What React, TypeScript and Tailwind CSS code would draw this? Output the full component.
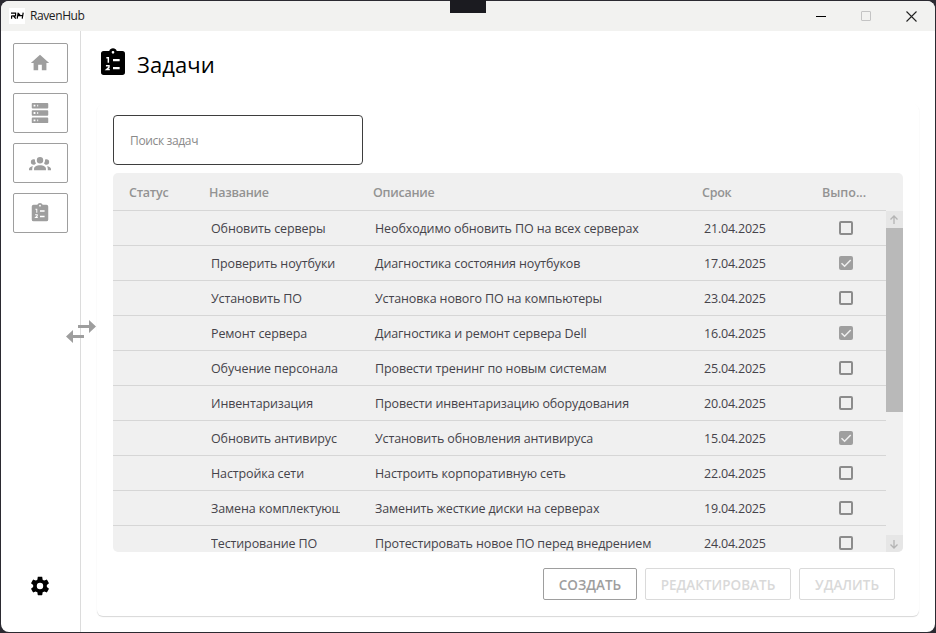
import React from "react";

const HOME = "M10,20V14H14V20H19V12H22L12,3L2,12H5V20H10Z";
const SERVER =
  "M4,1H20A1,1 0 0,1 21,2V6A1,1 0 0,1 20,7H4A1,1 0 0,1 3,6V2A1,1 0 0,1 4,1M4,9H20A1,1 0 0,1 21,10V14A1,1 0 0,1 20,15H4A1,1 0 0,1 3,14V10A1,1 0 0,1 4,9M4,17H20A1,1 0 0,1 21,18V22A1,1 0 0,1 20,23H4A1,1 0 0,1 3,22V18A1,1 0 0,1 4,17M9,5H10V3H9V5M9,13H10V11H9V13M9,21H10V19H9V21M5,3V5H7V3H5M5,11V13H7V11H5M5,19V21H7V19H5Z";
const GROUP =
  "M12,5.5A3.5,3.5 0 0,1 15.5,9A3.5,3.5 0 0,1 12,12.5A3.5,3.5 0 0,1 8.5,9A3.5,3.5 0 0,1 12,5.5M5,8C5.56,8 6.08,8.15 6.53,8.42C6.38,9.85 6.8,11.27 7.66,12.38C7.16,13.34 6.16,14 5,14A3,3 0 0,1 2,11A3,3 0 0,1 5,8M19,8A3,3 0 0,1 22,11A3,3 0 0,1 19,14C17.84,14 16.84,13.34 16.34,12.38C17.2,11.27 17.62,9.85 17.47,8.42C17.92,8.15 18.44,8 19,8M5.5,18.25C5.5,16.18 8.41,14.5 12,14.5C15.59,14.5 18.5,16.18 18.5,18.25V20H5.5V18.25M0,20V18.5C0,17.11 1.89,15.94 4.45,15.6C3.86,16.28 3.5,17.22 3.5,18.25V20H0M24,20H20.5V18.25C20.5,17.22 20.14,16.28 19.55,15.6C22.11,15.94 24,17.11 24,18.5V20Z";
const COG =
  "M12,15.5A3.5,3.5 0 0,1 8.5,12A3.5,3.5 0 0,1 12,8.5A3.5,3.5 0 0,1 15.5,12A3.5,3.5 0 0,1 12,15.5M19.43,12.97C19.47,12.65 19.5,12.33 19.5,12C19.5,11.67 19.47,11.34 19.43,11L21.54,9.37C21.73,9.22 21.78,8.95 21.66,8.73L19.66,5.27C19.54,5.05 19.27,4.96 19.05,5.05L16.56,6.05C16.04,5.66 15.5,5.32 14.87,5.07L14.5,2.42C14.46,2.18 14.25,2 14,2H10C9.75,2 9.54,2.18 9.5,2.42L9.13,5.07C8.5,5.32 7.96,5.66 7.44,6.05L4.95,5.05C4.73,4.96 4.46,5.05 4.34,5.27L2.34,8.73C2.21,8.95 2.27,9.22 2.46,9.37L4.57,11C4.53,11.34 4.5,11.67 4.5,12C4.5,12.33 4.53,12.65 4.57,12.97L2.46,14.63C2.27,14.78 2.21,15.05 2.34,15.27L4.34,18.73C4.46,18.95 4.73,19.03 4.95,18.95L7.44,17.94C7.96,18.34 8.5,18.68 9.13,18.93L9.5,21.58C9.54,21.82 9.75,22 10,22H14C14.25,22 14.46,21.82 14.5,21.58L14.87,18.93C15.5,18.67 16.04,18.34 16.56,17.94L19.05,18.95C19.27,19.03 19.54,18.95 19.66,18.73L21.66,15.27C21.78,15.05 21.73,14.78 21.54,14.63L19.43,12.97Z";

function Icon({ d, className }: { d: string; className: string }) {
  return (
    <svg viewBox="0 0 24 24" className={className} fill="currentColor">
      <path d={d} />
    </svg>
  );
}

function TasksIcon({ className }: { className: string }) {
  return (
    <svg viewBox="0 0 24 24" className={className}>
      <path
        fill="currentColor"
        fillRule="evenodd"
        d="M19,3H14.82C14.4,1.84 13.3,1 12,1S9.6,1.84 9.18,3H5A2,2 0 0,0 3,5V19A2,2 0 0,0 5,21H19A2,2 0 0,0 21,19V5A2,2 0 0,0 19,3ZM12,3A1,1 0 0,1 12,5A1,1 0 0,1 12,3Z"
      />
      <g fill="none" stroke="#fff">
        <path strokeWidth="1.1" d="M7 8H8.5V11.8M6.7 14H9V15.2L7.2 16.8H9.6" />
        <path strokeWidth="1.7" d="M12 9.9H17M12 15.9H17" />
      </g>
    </svg>
  );
}

function CheckBox({ checked }: { checked: boolean }) {
  return checked ? (
    <span className="flex size-[14px] items-center justify-center rounded-[2px] bg-[#9f9f9f]">
      <svg viewBox="0 0 14 14" className="size-[14px]" fill="none" stroke="#f0f0f0" strokeWidth="1.5">
        <path d="M2.5 7.2L5.6 10.2L11.7 4" />
      </svg>
    </span>
  ) : (
    <span className="size-[14px] rounded-[2px] border-2 border-[#8c8c8c]" />
  );
}

const TASKS: [string, string, string, boolean][] = [
  ["Обновить серверы", "Необходимо обновить ПО на всех серверах", "21.04.2025", false],
  ["Проверить ноутбуки", "Диагностика состояния ноутбуков", "17.04.2025", true],
  ["Установить ПО", "Установка нового ПО на компьютеры", "23.04.2025", false],
  ["Ремонт сервера", "Диагностика и ремонт сервера Dell", "16.04.2025", true],
  ["Обучение персонала", "Провести тренинг по новым системам", "25.04.2025", false],
  ["Инвентаризация", "Провести инвентаризацию оборудования", "20.04.2025", false],
  ["Обновить антивирус", "Установить обновления антивируса", "15.04.2025", true],
  ["Настройка сети", "Настроить корпоративную сеть", "22.04.2025", false],
  ["Замена комплектующих", "Заменить жесткие диски на серверах", "19.04.2025", false],
  ["Тестирование ПО", "Протестировать новое ПО перед внедрением", "24.04.2025", false],
];

function NavButton({ children }: { children: React.ReactNode }) {
  return (
    <button className="flex h-10 w-[55px] items-center justify-center rounded-[2px] border border-[#9e9e9e] pr-px text-[#9e9e9e]">
      {children}
    </button>
  );
}

function ScrollArrow({ down }: { down?: boolean }) {
  return (
    <div className="flex h-[17px] shrink-0 items-center justify-center bg-[#e6e6e6] pr-px">
      <svg viewBox="0 0 10 10" className="size-[10px]" fill="none" stroke="#b4b4b4" strokeWidth="1.3">
        <path d={down ? "M5 1V9M1.5 5.5L5 9L8.5 5.5" : "M5 9V1M1.5 4.5L5 1L8.5 4.5"} />
      </svg>
    </div>
  );
}

export default function App() {
  return (
    <div className="h-[633px] w-[936px] overflow-hidden bg-[#2b2a31] px-px py-px font-['Open_Sans','Noto_Sans',sans-serif]">
      <div className="absolute left-[450px] top-0 h-[13px] w-9 bg-[#1b1b20]" />
      <div className="flex h-[631px] w-[934px] flex-col overflow-hidden rounded-lg bg-white">
        <header className="flex h-[30px] shrink-0 items-center bg-[#f2f2f0] pl-2">
          <span className="flex size-4 items-center justify-center bg-white">
            <svg viewBox="0 0 16 16" className="size-4" fill="none" stroke="#000" strokeWidth="1.2">
              <path d="M2 5.2H6.6V7.8H3.2M2.6 7.5V10.8M4.6 8L6.8 10.6M9.2 4.6L8.2 10.6M8.8 7.7H13.8M14.2 4.6L13.2 10.6M9.3 5L11.3 7.5" />
            </svg>
          </span>
          <span className="ml-[5px] grow text-xs leading-none tracking-[-0.4px] text-[#1c1c1c]">RavenHub</span>
          <div className="flex items-center gap-[35px] pr-[18px]">
            <span className="h-px w-[10px] bg-black" />
            <span className="size-[10px] rounded-[1px] border border-[#c4c4c4]" />
            <svg viewBox="0 0 11 11" className="size-[11px]" fill="none" stroke="#222" strokeWidth="1.1">
              <path d="M.5 .5L10.5 10.5M10.5 .5L.5 10.5" />
            </svg>
          </div>
        </header>
        <div className="flex min-h-0 grow">
          <nav className="relative flex w-20 shrink-0 flex-col gap-[10px] border-r border-[#dcdcdc] pl-3 pt-3">
            <NavButton><Icon d={HOME} className="size-[22px]" /></NavButton>
            <NavButton><Icon d={SERVER} className="size-[22px]" /></NavButton>
            <NavButton><Icon d={GROUP} className="size-[22px]" /></NavButton>
            <NavButton><TasksIcon className="size-[22px]" /></NavButton>
            <div className="mb-[35px] ml-4 mt-auto"><Icon d={COG} className="size-[22px] text-black" /></div>
            <svg viewBox="0 0 30 23" className="absolute left-[65px] top-[289px] h-[23px] w-[30px] text-[#9e9e9e]" fill="currentColor">
              <path d="M12 5H23V0L30 6.5L23 13V8H12ZM18 15H7V10L0 16.5L7 23V18H18Z" />
            </svg>
          </nav>
          <main className="flex min-w-0 grow flex-col pl-4">
            <div className="flex h-[73px] shrink-0 items-center">
              <TasksIcon className="-mt-[9px] size-8 text-black" />
              <h1 className="-mt-[7px] ml-2 text-[22px] font-normal leading-none tracking-[0.1px] text-black">Задачи</h1>
            </div>
            <section className="flex h-[512px] w-[822px] flex-col rounded-md pl-4 pt-[11px] shadow-[0_1px_1px_rgba(0,0,0,0.16)]">
              <input
                placeholder="Поиск задач"
                className="h-[50px] w-[250px] shrink-0 rounded border border-[#3e3e3e] px-4 pt-px text-xs tracking-[-0.35px] text-[#8a8a8a] placeholder:text-[#8a8a8a]"
              />
              <div className="mt-2 flex h-[379px] w-[790px] shrink-0 flex-col overflow-hidden rounded-[5px] bg-[#f0f0f0]">
                <div className="flex h-[37px] shrink-0 items-center pl-4 pt-[3px] text-[12.5px] font-semibold tracking-[-0.25px] text-[#939393]">
                  <span className="w-20">Статус</span>
                  <span className="w-[164px]">Название</span>
                  <span className="w-[329px]">Описание</span>
                  <span className="w-[120px]">Срок</span>
                  <span className="tracking-normal">Выпо...</span>
                </div>
                <div className="flex min-h-0 grow">
                  <div className="w-[773px] overflow-hidden">
                    {TASKS.map(([name, description, due, done]) => (
                      <div key={name} className="flex h-[35px] items-center border-t border-[#d6d6d6] pl-[98px] text-[12.5px] tracking-[-0.12px] text-[#45434a]">
                        <span className="mr-[35px] w-[129px] overflow-hidden whitespace-nowrap pt-[3px]">{name}</span>
                        <span className="w-[329px] whitespace-nowrap pt-[3px]">{description}</span>
                        <span className="w-[135px] pt-[3px] tracking-[-0.2px]">{due}</span>
                        <CheckBox checked={done} />
                      </div>
                    ))}
                  </div>
                  <div className="flex w-[17px] flex-col pt-px">
                    <ScrollArrow />
                    <div className="h-[184px] bg-[#b9b9b9]" />
                    <div className="grow" />
                    <ScrollArrow down />
                  </div>
                </div>
              </div>
              <div className="mt-4 flex gap-2 pl-[430px] text-[13.5px] font-semibold">
                <button className="h-8 w-[94px] rounded-[2px] border border-[#9e9e9e] pt-0.5 text-[#9e9e9e]">СОЗДАТЬ</button>
                <button className="h-8 w-[146px] rounded-[2px] border border-[#dadada] pt-0.5 text-[#d9d9d9]">РЕДАКТИРОВАТЬ</button>
                <button className="h-8 w-[96px] rounded-[2px] border border-[#dadada] pt-0.5 text-[#d9d9d9]">УДАЛИТЬ</button>
              </div>
            </section>
          </main>
        </div>
      </div>
    </div>
  );
}
